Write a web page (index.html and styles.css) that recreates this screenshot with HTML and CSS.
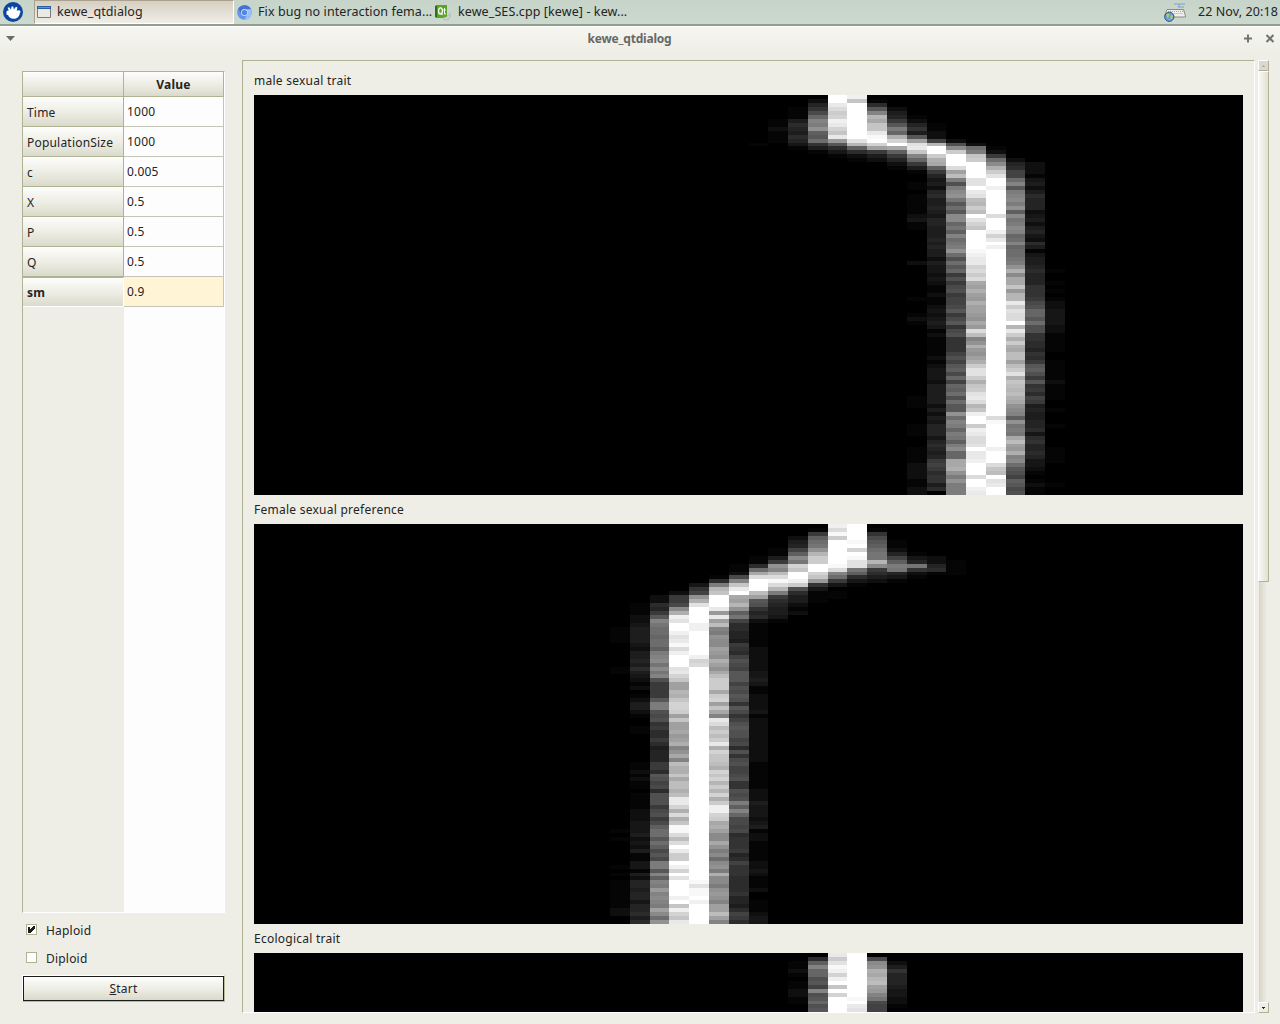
FILE: index.html
```html
<!DOCTYPE html>
<html lang="en">
<head>
<meta charset="utf-8">
<title>kewe_qtdialog</title>
<link rel="stylesheet" href="styles.css">
</head>
<body>
<header class="panel">
  <svg class="menu-logo" width="20" height="20" viewBox="0 0 20 20"><circle cx="10" cy="10" r="10" fill="#0b46a0"/><path d="M3.500 9.500q.8-1.500 2.300-1L4.600 5.800l1.700-.5 1.700 2.400L8.600 4.500l1.700 0 .5 3L13 4.800l1.400.8-.7 2.800 2.700-.2 1.300 1.500-.9 1.500c-.3 3.500-3 5.700-6.300 5.600-2.700 0-4.600-1.300-5.300-3.500l-1.700-.8z" fill="#fff"/></svg>
  <div class="task active">
    <svg width="14" height="12" viewBox="0 0 14 12"><path d="M.5.5h13v11H.5z" fill="#e9eae6" stroke="#787c80"/><path d="M0 0h14v3H0z" fill="#2b5f9f"/><path d="M1 1h12v1H1z" fill="#6395c8"/></svg>
    <span>kewe_qtdialog</span>
  </div>
  <div class="task browser">
    <svg width="15" height="15" viewBox="0 0 15 15"><circle cx="7.5" cy="7.5" r="7.3" fill="#6495e8"/><path d="M1.2 4A7.3 7.3 0 0 1 14 4.3H7.5L4.2 8.5z" fill="#4571d2"/><path d="M14 4.3a7.3 7.3 0 0 1-6.8 10.5l3.4-5.5-.4-5z" fill="#9dbef6"/><circle cx="7.5" cy="7.5" r="3.5" fill="#c4d8f8"/><circle cx="7.5" cy="7.5" r="2.6" fill="#4e86ea"/></svg>
    <span>Fix bug no interaction fema...</span>
  </div>
  <div class="task editor">
    <svg width="16" height="17" viewBox="0 0 16 17"><path d="M0 2 2 1v13l-2-1z" fill="#2e720f"/><path d="M2 1h10v13H2z" fill="#58a526"/><ellipse cx="5.500" cy="7" rx="1.900" ry="3.200" fill="none" stroke="#fff" stroke-width="1.300"/><path d="m5.700 8.700 2 2.500M9.500 4v6H11M8.300 6h2.500" fill="none" stroke="#fff"/><path d="M8 13.500q4 .5 7-4 1 6-4 6.500-3 0-3-2.500z" fill="#d0d2d1" stroke="#a0a0a0" stroke-width=".5"/></svg>
    <span>kewe_SES.cpp [kewe] - kew...</span>
  </div>
  <svg class="keyboard" width="23" height="20" viewBox="0 0 23 20"><path d="M10 2h4q3 0 1 1.500l-1 1.500h6M15.500 2H21" fill="none" stroke="#7aa0c8"/><path d="M3 7.500h16.500l2 6.500V15H1v-2z" fill="#eeeeec" stroke="#888a85"/><path d="M4 9.500h15M3.500 11.500h16" stroke="#a9aaa5" stroke-dasharray="1 1"/><circle cx="5.300" cy="14.800" r="4.600" fill="#6a9be0" stroke="#2c4f83"/><path d="m2 12.500 2.500-1 1 2-2 3zM6 15.500l2-3 1 2-1 3zM4 17.500l2-.500.500 1.500z" fill="#b4d048"/></svg>
  <span class="clock">22 Nov, 20:18</span>
</header>
<div class="titlebar">
  <svg class="winmenu" width="9" height="5" viewBox="0 0 9 5"><path d="M0 0h9L4.500 5z" fill="#6b6b68"/></svg>
  <h1>kewe_qtdialog</h1>
  <svg class="winbtn" width="31" height="9" viewBox="0 0 31 9"><path d="M0 4.500h8M4 .500v8" stroke="#747472" stroke-width="2"/><path d="m22.500 1 7 7m0-7-7 7" stroke="#747472" stroke-width="2.100"/></svg>
</div>
<main class="window">
  <aside class="side">
    <div class="table">
      <div class="row head"><div class="key"></div><div class="val">Value</div></div>
      <div class="row"><div class="key">Time</div><div class="val">1000</div></div>
      <div class="row"><div class="key">PopulationSize</div><div class="val">1000</div></div>
      <div class="row"><div class="key">c</div><div class="val">0.005</div></div>
      <div class="row"><div class="key">X</div><div class="val">0.5</div></div>
      <div class="row"><div class="key">P</div><div class="val">0.5</div></div>
      <div class="row"><div class="key">Q</div><div class="val">0.5</div></div>
      <div class="row current"><div class="key">sm</div><div class="val">0.9</div></div>
      <div class="filler"></div>
    </div>
    <label class="check"><span class="box"><svg width="7" height="7" viewBox="0 0 7 7" shape-rendering="crispEdges"><path d="M0 1h2v2h1V2h1V1h1V0h2v3H6v1H5v1H4v1H3v1H0z" fill="#1c1c1c"/></svg></span>Haploid</label>
    <label class="check"><span class="box"></span>Diploid</label>
    <div class="default-frame"><button class="start"><u>S</u>tart</button></div>
  </aside>
  <section class="plots">
    <h2>male sexual trait</h2>
    <canvas id="male" width="989" height="400"></canvas>
    <h2>Female sexual preference</h2>
    <canvas id="female" width="989" height="400"></canvas>
    <h2>Ecological trait</h2>
    <canvas id="eco" width="989" height="400"></canvas>
  </section>
  <div class="scrollbar">
    <div class="arrow off"><svg width="3" height="2" viewBox="0 0 3 2" shape-rendering="crispEdges"><path d="M1 0h1v1h1v1H0V1h1z" fill="#b5afa2"/></svg></div>
    <div class="thumb"></div>
    <div class="trough"></div>
    <div class="arrow"><svg width="3" height="2" viewBox="0 0 3 2" shape-rendering="crispEdges"><path d="M0 0h3v1H2v1H1V1H0z" fill="#222"/></svg></div>
  </div>
</main>
<script src="plots.js"></script>
</body>
</html>
```
FILE: styles.css
```css
* { box-sizing: border-box; }
body { margin: 0; width: 1280px; height: 1024px; overflow: hidden; display: flex; flex-direction: column; background: #eeeee6; color: #242424; font: 12px "Noto Sans", "Open Sans", sans-serif; letter-spacing: .2px; }
h1, h2 { margin: 0; }
svg, canvas { display: block; flex: none; }
.panel { height: 26px; flex: none; display: flex; align-items: center; padding: 0 2px 0 3px; font-size: 12.5px; letter-spacing: .1px; background: linear-gradient(#c6d4ca, #cbd9cf); border-bottom: 2px solid #929d8d; white-space: nowrap; }
.menu-logo { margin-right: 11px; }
.task { display: flex; align-items: center; height: 24px; }
.task span, .clock { position: relative; top: -1px; }
.task.active { width: 200px; gap: 6px; padding-left: 2px; border-left: 1px solid #aaa28e; border-top: 1px solid #aaa28e; border-right: 1px solid #fff; border-bottom: 1px solid #fff; background: linear-gradient(#d6cfc2, #f1eee8); }
.browser { width: 199px; gap: 6px; padding-left: 3px; }
.editor { gap: 7px; padding-left: 2px; }
.keyboard { margin-left: auto; margin-right: 11px; }
.titlebar { height: 34px; flex: none; display: flex; align-items: center; padding: 0 6px 10px; border-top: 1px solid #fff; background: linear-gradient(#f6f6f1, #eeeee6 26px); }
.titlebar h1 { flex: 1; text-align: center; font-size: 12px; letter-spacing: -.2px; color: #686868; }
.winbtn { margin-right: -1px; }
.window { flex: 1; min-height: 0; display: flex; padding-left: 22px; }
.side { width: 203px; display: flex; flex-direction: column; padding-top: 11px; }
.table { width: 203px; height: 842px; display: flex; flex-direction: column; border: 1px solid #fff; border-left-color: #b0b294; border-top-color: #b0b294; }
.row { display: flex; height: 30px; flex: none; }
.key { width: 101px; display: flex; align-items: center; padding: 1px 0 0 4px; background: linear-gradient(#fdfdfb, #eeeee6 50%, #dadacb); border-right: 1px solid #b0b294; border-bottom: 1px solid #b0b294; box-shadow: inset 0 1px #fff; }
.val { width: 100px; display: flex; align-items: center; padding: 0 0 1px 3px; background: #fdfdfd; border-right: 1px solid #c4c4b8; border-bottom: 1px solid #c4c4b8; }
.row.head { height: 25px; }
.head .val { justify-content: center; font-weight: bold; padding: 0; background: linear-gradient(#fdfdfb, #eeeee6 50%, #dadacb); border-color: #b0b294; }
.current .key { font-weight: bold; border-top: 1px solid #b0b294; border-right-color: #fff; border-bottom-color: #fff; }
.current .val { background: #fff4d6; }
.filler { flex: 1; background: linear-gradient(90deg, #eeeee6 101px, #fdfdfd 101px); }
.check { height: 28px; display: flex; align-items: center; gap: 9px; padding-left: 4px; }
.table + .check { margin-top: 3px; }
.box { width: 11px; height: 11px; padding: 1px; margin-bottom: 1px; border: 1px solid #b0b294; background: #fff; }
.default-frame { height: 27px; margin-top: 3px; display: flex; border: 1px solid #fff; border-right-color: #b8ba9e; border-bottom-color: #b8ba9e; }
.start { flex: 1; padding: 0 0 1px; font: inherit; letter-spacing: inherit; color: inherit; border: 1px solid #1c1c1c; outline: 0; background: linear-gradient(#fdfdfb, #eeeee6 50%, #dadacb); }
.plots { width: 1013px; height: 953px; margin-left: 17px; padding: 5px 0 0 11px; overflow: hidden; border: 1px solid #fff; border-left-color: #b0b294; border-top-color: #b0b294; }
.plots h2 { height: 29px; line-height: 30px; font-size: 12px; font-weight: normal; letter-spacing: .25px; }
.scrollbar { width: 11px; height: 953px; margin-left: 3px; display: flex; flex-direction: column; }
.arrow { height: 11px; flex: none; display: flex; align-items: center; justify-content: center; border: 1px solid #fff; border-right-color: #b0b294; border-bottom-color: #b0b294; background: #eeeee6; }
.arrow.off { background: #ddd8ce; border-right-color: #b5ad9b; border-bottom-color: #b5ad9b; }
.thumb { height: 511px; border: 1px solid #fff; border-right-color: #b0b294; border-bottom-color: #b0b294; background: linear-gradient(90deg, #f8f8f5, #e0e0d4); }
.trough { flex: 1; margin-left: 1px; background: linear-gradient(90deg, #d9d3c7, #eeeee6 80%); }
```
FILE: plots.js
```js
// Trait histograms over time: 50 bins across, 101 samples down.
// Each bin is a string of base-36 densities, one per sample; z is saturated.
const BINS = 50, SAMPLES = 101;

const male = {
  25: "0000000000001",
  26: "000000112111",
  27: "00011146546531",
  28: "0257aeihkdcf741",
  29: "zzwustxwtrwlc631",
  30: "xrzzzzzzzzzvpd621",
  31: "016cipnrrwyztm842",
  32: "0002458cheotznd8521",
  33: "0000012574" + "cmvwrie841" + "0011" + "01111123110000000020" + "00000001000121" + "000000000000" + "0000001110" + "0001110001" + "1112222112" + "2",
  34: "0000000112" + "29pzzsond8" + "5342" + "5644543554" + "4454544243" + "3232112112" + "32343121" + "11112123332444" + "442424355535654589867746",
  35: "0000000000" + "02bjszzzum" + "qhbh" + "jkgcfcjjeg" + "difghkfbfc" + "e8b8ab899a" + "c8ac7ab7" + "7779b9cda" + "e9edfbfcckfiheh" + "gdhjeennokhkhhh",
  36: "0000000000" + "002fhrszzz" + "zvvz" + "wvqpsqzvtr" + "zzzzzyxwwt" + "usunmomlom" + "mlknluqi" + "kolkmosvvsorsvw" + "uprxzzsxwuuvzwwxzzzuzzxw",
  37: "0000000000" + "000128fjos" + "vzzxzzzzzzuzzzxtwzxz" + "z".repeat(41) + "uyzzzzzzxzzzurqzvwzz",
  38: "0000000000" + "0000002569" + "9fic" + "hijhkdjghj" + "iefieffghk" + "ojnnrlppws" + "vuuzpwso" + "sonqqmqsvorqpqo" + "nkjidkghgnqmloijfcb9dcab",
  39: "0000000000" + "0000000222" + "1342" + "4655523424" + "5326413445" + "65557778ab" + "eecfbb77" + "66576" + "8cdb8c786984" + "5445563675565332101211",
  40: "0".repeat(44) + "1001010122" + "33332211" + "11100111112" + "11110010001000001111" + "000001"
};

const female = {
  18: "0".repeat(24) + "0011110000" + "0011" + "0".repeat(39) + "1010" + "0".repeat(4) + "0101011" + "1111122",
  19: "0000000000" + "0000000000" + "1112234444" + "3244546432" + "1201244210" + "0110000000" + "1121211011" + "1122233342" + "3241133142" + "55455355646",
  20: "0000000000" + "0000000022" + "658cigffef" + "fdhijgjgib" + "8888chhbab" + "7866864555" + "886cb9a6bb" + "b8ab8adffc" + "fdacahhcid" + "ihlijihmjfk",
  21: "0000000000" + "0000000288" + "ajoxvzzxvw" + "yuxzzzvwtr" + "mmporttsmr" + "mmnlmoikni" + "qoornqqoqw" + "wtouoryyuq" + "uzwsszxtzv" + "zzzzxzrxtrw",
  22: "0000000000" + "00000379ko" + "vzzzzxxzzz" + "zzzxtu" + "z".repeat(54) + "yvyyzx" + "zzzzz",
  23: "0000000000" + "00016hprzz" + "zwlwmqihkj" + "jmlkomknqs" + "ssnstmrniw" + "uqsqswotrr" + "qotrtpspto" + "sxxtsnomjj" + "nkhjfjkhoj" + "jhklkimmqmi",
  24: "0000000000" + "112airwznm" + "pkdg966554" + "8769ba9ccc" + "9bacb7ca79" + "bcbb9a6b7a" + "b99ab77bab" + "hdieaa9a67" + "7785697776" + "66675546986",
  25: "0000000011" + "6fnuzzzqmc" + "b756211111" + "1222222334" + "3112222312" + "2222222222" + "1111111222" + "4333234122" + "1111122321" + "11200111233",
  26: "0000001148" + "kiquyuph86" + "54431",
  27: "0002459djg" + "trzzxsb644" + "212",
  28: "018dfgkpss" + "zztrl73111",
  29: "xuyszzzzzz" + "yuif830110",
  30: "zzzzyztzyv" + "vgd631",
  31: "017acdfggp" + "j8642",
  32: "000011259d" + "hg531",
  33: "0000000135" + "g721",
  34: "0000000022" + "561",
  35: "0000000001" + "111"
};

const eco = {
  27: "001121011221100",
  28: "06dieebc9ibcebc",
  29: "wsvyxtxzrztzzzz",
  30: "zzzzzzzzzzzyzwv",
  31: "0ajkonpqmliga99",
  32: "002475554332210"
};

function draw(id, bins) {
  const canvas = document.getElementById(id);
  const g = canvas.getContext("2d");
  g.fillStyle = "#000";
  g.fillRect(0, 0, canvas.width, canvas.height);
  for (const [bin, levels] of Object.entries(bins)) {
    const x = Math.round(bin * canvas.width / BINS);
    const right = Math.round((+bin + 1) * canvas.width / BINS);
    for (let i = 0; i < Math.min(levels.length, SAMPLES); i++) {
      const n = parseInt(levels[i], 36);
      const v = n === 1 ? 5 : Math.round(n * 255 / 35);
      const y = Math.round(i * canvas.height / SAMPLES);
      const bottom = Math.round((i + 1) * canvas.height / SAMPLES);
      g.fillStyle = `rgb(${v},${v},${v})`;
      g.fillRect(x, y, right - x, bottom - y);
    }
  }
}

draw("male", male);
draw("female", female);
draw("eco", eco);
```
